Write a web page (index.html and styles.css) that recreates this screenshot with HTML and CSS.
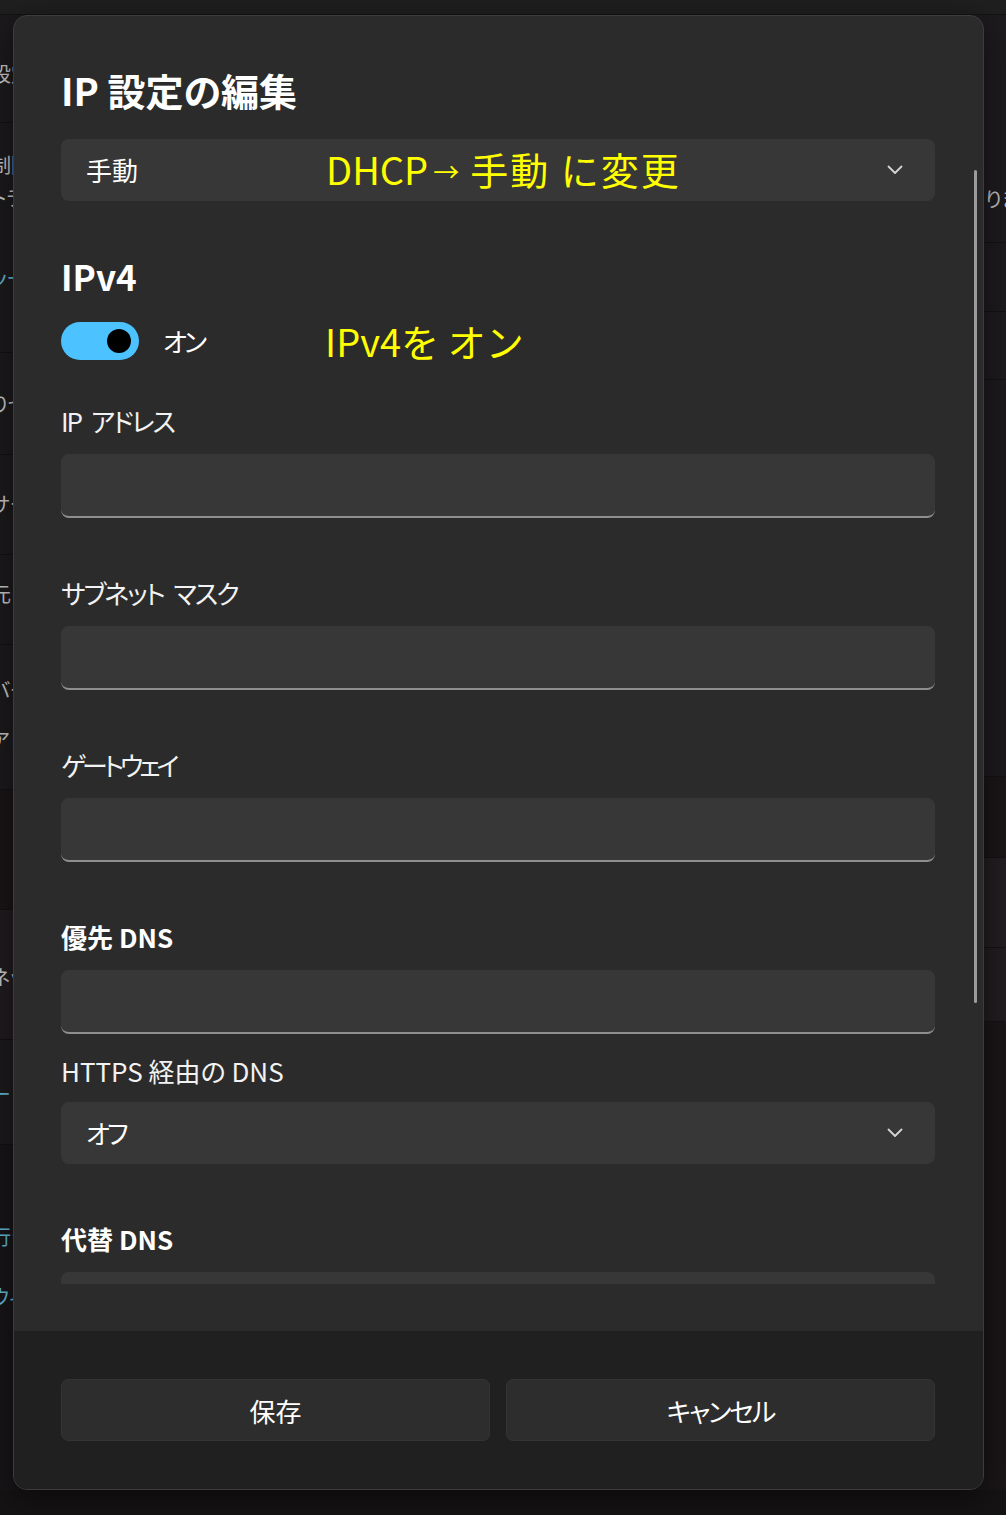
FILE: index.html
```html
<!DOCTYPE html>
<html lang="ja">
<head>
  <meta charset="UTF-8" />
  <meta name="viewport" content="width=device-width, initial-scale=1.0"/>
  <title>IP 設定の編集</title>
  <link rel="stylesheet" href="styles.css">
</head>
<body>

  <!-- Settings page behind the dialog -->
  <div class="topbar"></div>
  <div class="backdrop">
    <div class="nav">
      <div class="nav-row r1"><p>設定</p></div>
      <div class="nav-row r2"><p>制限</p><p>トラフィック</p><p class="link gap">ッール</p></div>
      <div class="nav-row r3"><p>りセット</p></div>
      <div class="nav-row r4"><p>サーバー</p></div>
      <div class="nav-row r5"><p>元に戻す</p></div>
      <div class="nav-row r6"><p>バージョン</p><p>アドレス</p></div>
      <div class="nav-row r7"></div>
      <div class="nav-row r8"><p>ネットワーク</p></div>
      <div class="nav-row r9"><p class="link">ー</p></div>
      <div class="nav-row r10"><p class="link">行う</p><p class="link">ウィンドウ</p></div>
    </div>
    <div class="pane">
      <div class="pane-row p1"><p>ります</p></div>
      <div class="pane-row p2"></div>
      <div class="pane-row p3"></div>
      <div class="pane-row p4"></div>
      <div class="pane-row p5"></div>
      <div class="pane-row p6"></div>
      <div class="pane-row p7"></div>
      <div class="pane-row p8"></div>
    </div>
  </div>

  <!-- Dialog -->
  <div class="dialog">
    <div class="dialog-body">
      <div class="scroll">
        <h1 class="title">IP 設定の編集</h1>

        <div class="select">
          <span class="select-value">手動</span>
          <span class="note note-mode">DHCP<span class="arrow">→</span><span class="spaced">手動 に変更</span></span>
          <svg class="chevron" width="16" height="10" viewBox="0 0 16 10"><polyline points="1.5,1.5 8,8 14.5,1.5" fill="none" stroke="#d4d4d4" stroke-width="1.8" stroke-linecap="round" stroke-linejoin="round"/></svg>
        </div>

        <h2 class="section">IPv4</h2>
        <div class="toggle-row">
          <span class="toggle"><span class="knob"></span></span>
          <span class="toggle-label">オン</span>
          <span class="note note-ipv4">IPv4を オン</span>
        </div>

        <div class="field first">
          <label class="kana">IP アドレス</label>
          <div class="input"></div>
        </div>
        <div class="field">
          <label class="kana">サブネット マスク</label>
          <div class="input"></div>
        </div>
        <div class="field">
          <label class="kana tighter">ゲートウェイ</label>
          <div class="input"></div>
        </div>
        <div class="field">
          <label class="strong">優先 DNS</label>
          <div class="input"></div>
        </div>
        <div class="field tight">
          <label>HTTPS 経由の DNS</label>
          <div class="select select-field">
            <span class="select-value kana-value">オフ</span>
            <svg class="chevron" width="16" height="10" viewBox="0 0 16 10"><polyline points="1.5,1.5 8,8 14.5,1.5" fill="none" stroke="#d4d4d4" stroke-width="1.8" stroke-linecap="round" stroke-linejoin="round"/></svg>
          </div>
        </div>
        <div class="field">
          <label class="strong">代替 DNS</label>
          <div class="input"></div>
        </div>
      </div>
      <div class="scrollbar"></div>
    </div>

    <div class="dialog-footer">
      <button class="btn">保存</button>
      <button class="btn kana-btn">キャンセル</button>
    </div>
  </div>

</body>
</html>
```

FILE: styles.css
```css
* {
  box-sizing: border-box;
  margin: 0;
  padding: 0;
}

body {
  position: relative;
  width: 1006px;
  height: 1515px;
  overflow: hidden;
  background: #161315;
  color: #ffffff;
  font-family: "Noto Sans CJK JP", "Noto Sans", sans-serif;
  font-feature-settings: "palt";
}

/* backdrop page */
.topbar {
  height: 15px;
  background: #1f1f1f;
  border-bottom: 1px solid #141214;
}

.backdrop {
  display: grid;
  grid-template-columns: 230px 1fr;
}

.nav {
  margin-left: -9px;
}

.nav-row {
  background: #1c1a1c;
  border-bottom: 1px solid #131113;
  font-size: 20px;
  line-height: 24px;
  color: #c8c8c8;
  white-space: nowrap;
}

.nav-row .link { color: #63b8d6; }

.r1 { height: 108px; padding-top: 47px; }
.r2 { height: 230px; padding-top: 25px; line-height: 33px; }
.r2 .gap { margin-top: 47px; }
.r3 { height: 102px; padding-top: 39px; }
.r4 { height: 100px; padding-top: 37px; }
.r5 { height: 90px; padding-top: 27px; }
.r6 { height: 145px; padding-top: 20px; line-height: 50px; }
.r7 { height: 120px; background: #1a1517; }
.r8 { height: 130px; padding-top: 55px; background: #201b1f; }
.r9 { height: 105px; padding-top: 42px; }
.r10 { height: 345px; padding-top: 62px; line-height: 60px; background: #181518; border-bottom: none; }

.pane-row {
  background: #1e1b1e;
  border-bottom: 1px solid #141214;
  font-size: 20px;
  line-height: 24px;
  color: #bdbdbd;
  padding-left: 755px;
  white-space: nowrap;
}

.p1 { height: 228px; padding-top: 172px; }
.p2 { height: 69px; }
.p3 { height: 68px; }
.p4 { height: 397px; background: #1d1a1d; }
.p5 { height: 81px; background: #1b1517; }
.p6 { height: 90px; background: #221e21; }
.p7 { height: 74px; background: #211d20; }
.p8 { height: 468px; background: #1a1617; border-bottom: none; }

/* dialog */
.dialog {
  position: absolute;
  left: 13px;
  top: 15px;
  width: 971px;
  height: 1475px;
  display: flex;
  flex-direction: column;
  background: #2b2b2b;
  border: 1px solid #3c3c3c;
  border-radius: 14px;
  overflow: hidden;
  box-shadow: 0 8px 32px rgba(0, 0, 0, 0.5);
}

.dialog-body {
  position: relative;
  flex: 1;
  padding-bottom: 47px;
}

.scroll {
  height: 1268px;
  overflow: hidden;
  padding: 49px 48px 0 47px;
}

.scrollbar {
  position: absolute;
  top: 154px;
  right: 6px;
  width: 3px;
  height: 833px;
  border-radius: 2px;
  background: #9c9c9c;
}

.title {
  font-size: 38px;
  line-height: 50px;
  font-weight: 700;
}

.select {
  display: flex;
  align-items: center;
  height: 62px;
  margin-top: 24px;
  padding: 0 32px 0 25px;
  background: #373737;
  border-radius: 8px;
}

.select-value {
  font-size: 26px;
  line-height: 34px;
}

.kana-value {
  letter-spacing: -3px;
}

.chevron {
  margin-left: auto;
}

.note {
  color: #ffff00;
  font-size: 38px;
  line-height: 50px;
  font-weight: 400;
  font-feature-settings: normal;
  white-space: nowrap;
}

.note-mode {
  margin-left: 188px;
}

.note .arrow {
  display: inline-block;
  margin: 0 11px 0 5px;
  font-size: 26px;
  vertical-align: 3px;
}

.note .spaced {
  letter-spacing: 2px;
}

.section {
  margin-top: 53px;
  font-size: 35px;
  line-height: 44px;
  font-weight: 700;
}

.toggle-row {
  display: flex;
  align-items: center;
  height: 38px;
  margin-top: 24px;
}

.toggle {
  display: flex;
  align-items: center;
  justify-content: flex-end;
  width: 78px;
  height: 38px;
  padding-right: 8px;
  border-radius: 19px;
  background: #4cc2ff;
}

.knob {
  width: 24px;
  height: 24px;
  border-radius: 50%;
  background: #000000;
}

.toggle-label {
  margin-left: 24px;
  font-size: 26px;
  line-height: 34px;
  letter-spacing: -3px;
}

.note-ipv4 {
  margin-left: 121px;
}

.field {
  margin-top: 58px;
}

.field.first {
  margin-top: 44px;
}

.field.tight {
  margin-top: 20px;
}

.field label {
  display: block;
  font-size: 26px;
  line-height: 34px;
  color: #f2f2f2;
}

.field label.kana {
  letter-spacing: -2px;
  word-spacing: 6px;
}

.field label.tighter {
  letter-spacing: -4px;
}

.field label.strong {
  font-weight: 700;
  color: #ffffff;
}

.input {
  height: 64px;
  margin-top: 16px;
  background: #373737;
  border-radius: 8px;
  border-bottom: 2px solid #8e8e8e;
}

.select-field {
  margin-top: 14px;
}

/* footer */
.dialog-footer {
  display: grid;
  grid-template-columns: 1fr 1fr;
  gap: 16px;
  padding: 48px 48px 48px 47px;
  background: #202020;
}

.btn {
  height: 62px;
  background: #2d2d2d;
  border: 1px solid #343434;
  border-radius: 7px;
  color: #ffffff;
  font-family: "Noto Sans CJK JP", "Noto Sans", sans-serif;
  font-feature-settings: "palt";
  font-size: 26px;
}

.kana-btn {
  letter-spacing: -2px;
}
```
